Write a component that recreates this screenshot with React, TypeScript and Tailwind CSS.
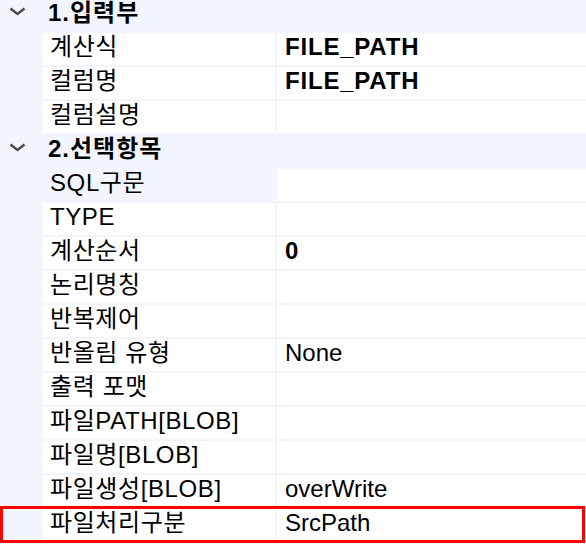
import { ReactNode } from 'react'

type Row = { label: string; value?: string; bold?: boolean; dimLabel?: boolean; marked?: boolean }

const sections: { title: string; rows: Row[] }[] = [
  {
    title: '1.입력부',
    rows: [
      { label: '계산식', value: 'FILE_PATH', bold: true },
      { label: '컬럼명', value: 'FILE_PATH', bold: true },
      { label: '컬럼설명' },
    ],
  },
  {
    title: '2.선택항목',
    rows: [
      { label: 'SQL구문', dimLabel: true },
      { label: 'TYPE' },
      { label: '계산순서', value: '0', bold: true },
      { label: '논리명칭' },
      { label: '반복제어' },
      { label: '반올림 유형', value: 'None' },
      { label: '출력 포맷' },
      { label: '파일PATH[BLOB]' },
      { label: '파일명[BLOB]' },
      { label: '파일생성[BLOB]', value: 'overWrite' },
      { label: '파일처리구분', value: 'SrcPath', marked: true },
    ],
  },
]

function Chevron() {
  return (
    <svg width="17" height="9" viewBox="0 0 17 9" className="shrink-0">
      <polyline points="1.5,1.5 8.5,7 15.5,1.5" fill="none" stroke="#4a4a4a" strokeWidth="2.4" />
    </svg>
  )
}

function Cell({ children, className }: { children?: ReactNode; className?: string }) {
  return <div className={`h-full flex items-center pb-[5px] ${className ?? ''}`}>{children}</div>
}

export default function App() {
  return (
    <div
      className="w-[586px] h-[544px] overflow-hidden bg-[#f2f5fb] text-black text-[24px] leading-none"
      style={{ fontFamily: '"Liberation Sans", "Noto Sans CJK KR", sans-serif' }}
    >
      <div className="relative mt-[-1px] flex flex-col gap-[2px]">
        {sections.map((section) => (
          <div key={section.title} className="flex flex-col gap-[2px]">
            {/* Category header */}
            <div className="h-[32px] flex items-center">
              <div className="w-[48px] pl-[9px] pb-[7px] flex items-center">
                <Chevron />
              </div>
              <Cell className="font-bold tracking-[1px]">{section.title}</Cell>
            </div>

            {section.rows.map((row) => (
              <div key={row.label} className="relative h-[32px] flex gap-[2px]">
                <div className="w-[41px] shrink-0" />
                <Cell
                  className={`w-[232px] shrink-0 pl-[7px] tracking-[0.6px] ${row.dimLabel ? 'bg-[#f2f5fb]' : 'bg-white'}`}
                >
                  {row.label}
                </Cell>
                <Cell className={`flex-1 bg-white pl-[8px] ${row.bold ? 'font-bold tracking-[0.8px]' : ''}`}>
                  {row.value}
                </Cell>
                {row.marked && (
                  <div className="absolute left-0 top-[-3px] w-[585px] h-[37px] border-[3px] border-[#ff0000] pointer-events-none" />
                )}
              </div>
            ))}
          </div>
        ))}
      </div>
    </div>
  )
}
